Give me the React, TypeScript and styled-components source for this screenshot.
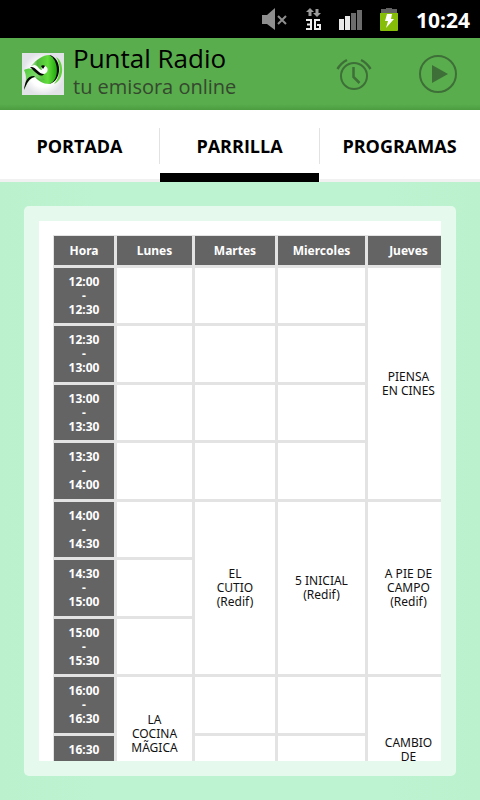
import React from "react";
import styled, { createGlobalStyle } from "styled-components";

const GlobalStyle = createGlobalStyle`
  * { box-sizing: border-box; }
  body { margin: 0; font-family: "Noto Sans", "Open Sans", sans-serif; }
`;

const Screen = styled.div`
  display: flex;
  flex-direction: column;
  height: 100vh;
  background: linear-gradient(90deg, #bbf1cd, #bef3d1 20%, #bef3d1 80%, #bbf1cd);
`;

const StatusBar = styled.div`
  display: flex;
  align-items: center;
  justify-content: flex-end;
  height: 38px;
  flex: none;
  padding: 2px 10px 0 0;
  background: #000;
  color: #fff;
`;

const StatusIcons = styled.div`
  display: flex;
  align-items: center;
  gap: 17px;
  margin-right: 18px;
`;

const Clock = styled.time`
  font-size: 21px;
  line-height: 24px;
  font-weight: 700;
`;

const Header = styled.header`
  display: flex;
  align-items: center;
  height: 72px;
  flex: none;
  padding: 0 22px;
  background: linear-gradient(#59ad4c, #59ad4c 92%, #4c9c40);
`;

const Titles = styled.div`
  flex: 1;
  margin-left: 9px;
  padding-bottom: 4px;
  font-family: "Open Sans", "Noto Sans", sans-serif;
`;

const Title = styled.h1`
  margin: 0;
  font-size: 26px;
  line-height: 30px;
  font-weight: 400;
  color: #000;
`;

const Subtitle = styled.p`
  margin: 0;
  font-size: 20px;
  line-height: 28px;
  color: #35482f;
`;

const Actions = styled.div`
  display: flex;
  align-items: center;
  gap: 46px;
`;

const IconButton = styled.button`
  display: flex;
  padding: 0;
  border: 0;
  background: none;
  color: #3e6f38;
`;

const Tabs = styled.nav`
  display: grid;
  grid-template-columns: repeat(3, 1fr);
  height: 72px;
  flex: none;
  background: #fff;
`;

const Tab = styled.button<{ $active?: boolean }>`
  display: flex;
  flex-direction: column;
  padding: 18px 0 0;
  border: 0;
  background: #fff;
  font: 700 18px/36px "Open Sans", "Noto Sans", sans-serif;
  color: #000;

  &::after {
    content: "";
    align-self: stretch;
    height: ${(p) => (p.$active ? "9px" : "3px")};
    margin-top: auto;
    margin-right: ${(p) => (p.$active ? "1px" : "0")};
    background: ${(p) => (p.$active ? "#000" : "#f1f1f1")};
  }
`;

const TabLabel = styled.span`
  align-self: stretch;
  text-align: center;
  border-right: 1px solid #e2e2e2;

  ${Tab}:last-child & {
    border-color: transparent;
  }
`;

const Content = styled.main`
  display: flex;
  flex: 1;
  min-height: 0;
  padding: 24px;
`;

const Panel = styled.section`
  display: flex;
  flex: 1;
  min-width: 0;
  padding: 15px;
  border-radius: 5px;
  background: #e5faed;
`;

const Viewport = styled.div`
  flex: 1;
  min-width: 0;
  overflow: hidden;
  padding: 14px;
  background: #fff;
`;

const Schedule = styled.table`
  table-layout: fixed;
  width: 397px;
  border-collapse: collapse;
  font-size: 12px;
  line-height: 14px;
  text-align: center;
  color: #111;
`;

const Column = styled.col<{ $width: number }>`
  width: ${(p) => p.$width}px;
`;

const HeadCell = styled.th`
  height: 31px;
  padding: 0;
  border: 3px solid #e3e3e3;
  border-top-width: 1px;
  background: #656465;
  color: #fff;

  &:first-child {
    border-left-width: 1px;
  }
`;

const Row = styled.tr`
  height: 58px;

  &:nth-child(even) {
    height: 59px;
  }
`;

const Hour = styled(HeadCell)`
  height: auto;
  border-top-width: 3px;
`;

const Slot = styled.td<{ $below?: number }>`
  padding: 0 0 ${(p) => p.$below ?? 0}px;
  border: 3px solid #e3e3e3;
  background: #fff;
`;

type Cell = { lines?: string[]; span?: number; below?: number };

const days: [string, number][] = [
  ["Hora", 62],
  ["Lunes", 78],
  ["Martes", 83],
  ["Miercoles", 90],
  ["Jueves", 84],
];

const rows: [string, string, Cell[]][] = [
  ["12:00", "12:30", [{}, {}, {}, { lines: ["PIENSA", "EN CINES"], span: 4 }]],
  ["12:30", "13:00", [{}, {}, {}]],
  ["13:00", "13:30", [{}, {}, {}]],
  ["13:30", "14:00", [{}, {}, {}]],
  ["14:00", "14:30", [
    {},
    { lines: ["EL", "CUTIO", "(Redif)"], span: 3 },
    { lines: ["5 INICIAL", "(Redif)"], span: 3 },
    { lines: ["A PIE DE", "CAMPO", "(Redif)"], span: 3 },
  ]],
  ["14:30", "15:00", [{}]],
  ["15:00", "15:30", [{}]],
  ["16:00", "16:30", [
    { lines: ["LA", "COCINA", "MÃGICA"], span: 2 },
    {},
    {},
    { lines: ["CAMBIO", "DE"], span: 3, below: 28 },
  ]],
  ["16:30", "17:00", [{}, {}]],
  ["17:00", "17:30", [{}, {}, {}]],
];

const Lines = ({ items }: { items: string[] }) => (
  <>
    {items.map((line, i) => (
      <React.Fragment key={i}>
        {i > 0 && <br />}
        {line}
      </React.Fragment>
    ))}
  </>
);

const MuteIcon = () => (
  <svg width="26" height="24" viewBox="0 0 26 24">
    <path d="M1 7h5l8-7v22l-8-6H1z" fill="#8e8e8e" />
    <path d="M17 8l8 8M25 8l-8 8" stroke="#8e8e8e" strokeWidth="2" />
  </svg>
);

const DataIcon = () => (
  <svg width="18" height="24" viewBox="0 0 18 24">
    <path d="M6 0l4 4H7.500v4h-3V4H2zM13 9L9 5h2.500V1h3v4H17z" fill="#9a9a9a" />
    <path d="M2 12h5v9H2M3 16.500h4M16 12h-5v9h5v-4h-3" fill="none" stroke="#eee" strokeWidth="2" />
  </svg>
);

const SignalIcon = () => (
  <svg width="24" height="24" viewBox="0 0 24 24">
    <path d="M0 11h5v11H0zM6 8h5v14H6z" fill="#e8e8e8" />
    <path d="M12 5h5v17h-5zM18 2h5v20h-5z" fill="#6c6c6c" />
  </svg>
);

const BatteryIcon = () => (
  <svg width="18" height="24" viewBox="0 0 18 24">
    <path d="M1 5V1h5V0h6v1h5v4z" fill="#636363" />
    <path d="M0 5h18v17a1 1 0 0 1-1 1H1a1 1 0 0 1-1-1z" fill="#86bd08" />
    <path d="M7 6h5l-1 5h3L6 20l2-7H5z" fill="#fff" />
  </svg>
);

const Logo = () => (
  <svg width="42" height="42" viewBox="0 0 42 42" role="img" aria-label="Puntal Radio">
    <defs>
      <radialGradient id="tile">
        <stop offset="0.600" stopColor="#fff" />
        <stop offset="1" stopColor="#e2e3e8" />
      </radialGradient>
      <linearGradient id="ball" x1="0" x2="1" y1="0" y2="0">
        <stop offset="0" stopColor="#bfe9b6" />
        <stop offset="0.250" stopColor="#4fb83a" />
        <stop offset="0.650" stopColor="#62dc3c" />
        <stop offset="1" stopColor="#1fa80c" />
      </linearGradient>
      <linearGradient id="tail" x1="0" x2="1" y1="0" y2="1">
        <stop offset="0" stopColor="#4ccf35" />
        <stop offset="0.450" stopColor="#7dd66b" />
        <stop offset="1" stopColor="#2aa01a" />
      </linearGradient>
    </defs>
    <rect width="42" height="42" fill="url(#tile)" />
    <path d="M34 4c8 4 9 22-2 27 7-8 7-19 2-27z" fill="#62d33c" />
    <path d="M27 2c13 2 14 26 0 29 8-7 8-21 0-29z" fill="#050505" />
    <path d="M9 13C15 6 21 2 27 2c10 4 11 26 0 29-6 0-11-3-16-9z" fill="url(#ball)" />
    <path d="M22 13c5 0 5 8-1 8-6 0-7-7-13-7l4-2c4 0 5 5 8 5-1-2 0-4 2-4z" fill="#fff" />
    <path d="M19 13c1-1 3-1 4 0l-2 3z" fill="#050505" />
    <path d="M2 17c9-5 12 3 17 7l4 3c-4 0-7-2-10-3C7 25 5 31 2 37c2-8 3-14 0-20z" fill="url(#tail)" />
    <path d="M8 14c6-1 8 7 14 7-2 3-6 1-9-2-2-2-3-3-5-5z" fill="#050505" />
    <path d="M13 24c-6 1-8 6-11 13 1-8 3-14 10-14z" fill="#050505" />
  </svg>
);

const AlarmIcon = () => (
  <svg width="36" height="36" viewBox="0 0 36 36" fill="none" stroke="currentColor">
    <circle cx="18" cy="20" r="13" strokeWidth="2" />
    <path d="M17.500 11v10l6 6" strokeWidth="2.500" />
    <path d="M1.500 13Q5 7 11 4M34.500 13Q31 7 25 4" strokeWidth="2.500" />
  </svg>
);

const PlayIcon = () => (
  <svg width="40" height="40" viewBox="0 0 40 40">
    <circle cx="20" cy="20" r="18" fill="none" stroke="currentColor" strokeWidth="2" />
    <path d="M14 11v18l16-9z" fill="currentColor" />
  </svg>
);

export default function App() {
  return (
    <Screen>
      <GlobalStyle />
      <StatusBar>
        <StatusIcons>
          <MuteIcon />
          <DataIcon />
          <SignalIcon />
          <BatteryIcon />
        </StatusIcons>
        <Clock>10:24</Clock>
      </StatusBar>
      <Header>
        <Logo />
        <Titles>
          <Title>Puntal Radio</Title>
          <Subtitle>tu emisora online</Subtitle>
        </Titles>
        <Actions>
          <IconButton aria-label="Alarma"><AlarmIcon /></IconButton>
          <IconButton aria-label="Reproducir"><PlayIcon /></IconButton>
        </Actions>
      </Header>
      <Tabs>
        <Tab><TabLabel>PORTADA</TabLabel></Tab>
        <Tab $active aria-current="page"><TabLabel>PARRILLA</TabLabel></Tab>
        <Tab><TabLabel>PROGRAMAS</TabLabel></Tab>
      </Tabs>
      <Content>
        <Panel>
          <Viewport>
            <Schedule>
              <colgroup>
                {days.map(([day, width]) => <Column key={day} $width={width} />)}
              </colgroup>
              <thead>
                <tr>
                  {days.map(([day]) => <HeadCell key={day} scope="col">{day}</HeadCell>)}
                </tr>
              </thead>
              <tbody>
                {rows.map(([from, to, cells]) => (
                  <Row key={from}>
                    <Hour scope="row"><Lines items={[from, "-", to]} /></Hour>
                    {cells.map((cell, i) => (
                      <Slot key={i} rowSpan={cell.span} $below={cell.below}>
                        {cell.lines && <Lines items={cell.lines} />}
                      </Slot>
                    ))}
                  </Row>
                ))}
              </tbody>
            </Schedule>
          </Viewport>
        </Panel>
      </Content>
    </Screen>
  );
}
